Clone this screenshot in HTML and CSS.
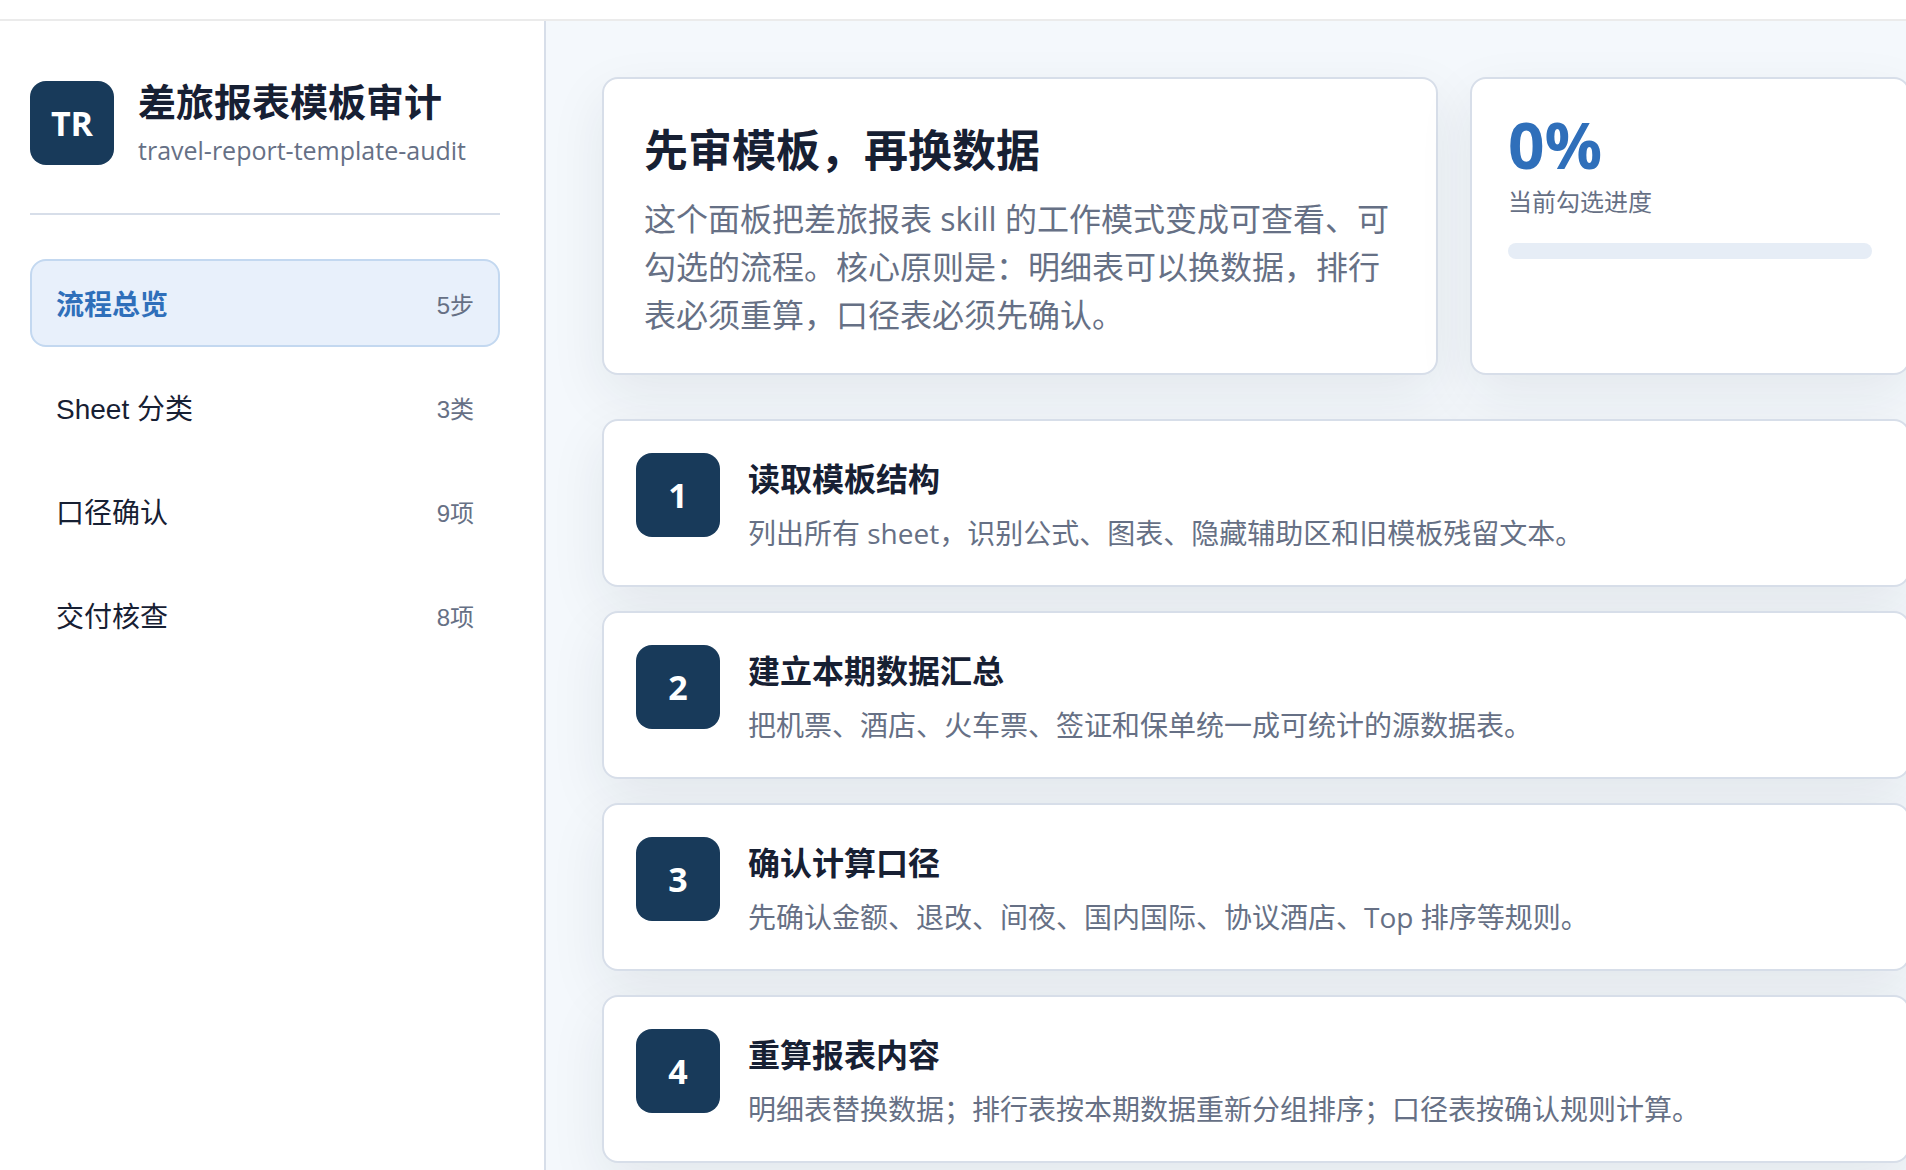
FILE: index.html
```html
<!DOCTYPE html>
<html lang="zh-CN">
<head>
<meta charset="utf-8">
<meta name="viewport" content="width=device-width, initial-scale=1">
<title>差旅报表模板审计</title>
<link rel="stylesheet" href="styles.css">
</head>
<body>
<div class="topbar"></div>
<div class="app">
  <aside class="sidebar">
    <header class="brand">
      <div class="mark">TR</div>
      <div class="brand-text">
        <h1>差旅报表模板审计</h1>
        <p>travel-report-template-audit</p>
      </div>
    </header>
    <nav class="nav">
      <button type="button" class="active" aria-current="page"><span>流程总览</span><small>5步</small></button>
      <button type="button"><span>Sheet 分类</span><small>3类</small></button>
      <button type="button"><span>口径确认</span><small>9项</small></button>
      <button type="button"><span>交付核查</span><small>8项</small></button>
    </nav>
  </aside>
  <main class="main">
    <section class="hero">
      <div class="card intro">
        <h2>先审模板，再换数据</h2>
        <p>这个面板把差旅报表 skill 的工作模式变成可查看、可勾选的流程。核心原则是：明细表可以换数据，排行表必须重算，口径表必须先确认。</p>
      </div>
      <div class="card score">
        <strong>0%</strong>
        <label for="progress">当前勾选进度</label>
        <progress id="progress" value="0" max="100"></progress>
      </div>
    </section>
    <section class="steps">
      <article class="card step">
        <div class="mark">1</div>
        <div>
          <h3>读取模板结构</h3>
          <p>列出所有 sheet，识别公式、图表、隐藏辅助区和旧模板残留文本。</p>
        </div>
      </article>
      <article class="card step">
        <div class="mark">2</div>
        <div>
          <h3>建立本期数据汇总</h3>
          <p>把机票、酒店、火车票、签证和保单统一成可统计的源数据表。</p>
        </div>
      </article>
      <article class="card step">
        <div class="mark">3</div>
        <div>
          <h3>确认计算口径</h3>
          <p>先确认金额、退改、间夜、国内国际、协议酒店、Top 排序等规则。</p>
        </div>
      </article>
      <article class="card step">
        <div class="mark">4</div>
        <div>
          <h3>重算报表内容</h3>
          <p>明细表替换数据；排行表按本期数据重新分组排序；口径表按确认规则计算。</p>
        </div>
      </article>
    </section>
  </main>
</div>
</body>
</html>
```
FILE: styles.css
```css
:root {
  --ink: #172033;
  --muted: #667085;
  --line: #d7dee9;
  --navy: #183a5a;
  --blue: #2f6fba;
}

* {
  box-sizing: border-box;
  margin: 0;
}

body {
  display: flex;
  flex-direction: column;
  height: 100vh;
  overflow: hidden;
  background: #f4f8fc;
  color: var(--ink);
  font-family: "Open Sans", "Noto Sans CJK SC", sans-serif;
}

.topbar {
  flex: none;
  height: 21px;
  background: #fff;
  border-bottom: 2px solid #ebebeb;
}

.app {
  flex: 1;
  min-height: 0;
  display: grid;
  grid-template-columns: 546px minmax(0, 1fr);
}

.sidebar {
  padding: 56px 44px 56px 30px;
  background: #fff;
  border-right: 2px solid var(--line);
}

.brand {
  display: flex;
  align-items: center;
  gap: 24px;
  padding-bottom: 44px;
  border-bottom: 2px solid var(--line);
}

.brand h1 {
  font-size: 38px;
  line-height: 48px;
  white-space: nowrap;
}

.brand p {
  margin-top: 6px;
  color: var(--muted);
  font-size: 25px;
  line-height: 38px;
}

.mark {
  flex: none;
  display: grid;
  place-items: center;
  width: 84px;
  height: 84px;
  border-radius: 16px;
  background: var(--navy);
  color: #fff;
  font-size: 34px;
  font-weight: 700;
}

.nav {
  display: grid;
  gap: 16px;
  margin-top: 44px;
}

.nav button {
  display: flex;
  align-items: center;
  justify-content: space-between;
  height: 88px;
  padding: 0 24px;
  border: 2px solid transparent;
  border-radius: 16px;
  background: none;
  color: var(--ink);
  font-family: "Liberation Sans", "Noto Sans CJK SC", sans-serif;
  font-size: 28px;
}

.nav small {
  color: var(--muted);
  font-size: 24px;
  font-weight: 400;
}

.nav .active {
  border-color: #c3d8f0;
  background: #e8f0fb;
  color: var(--blue);
  font-weight: 700;
}

.main {
  margin-right: -4px;
  padding: 56px 0 56px 56px;
}

.card {
  border: 2px solid var(--line);
  border-radius: 16px;
  background: #fff;
  box-shadow: 0 20px 56px rgba(23, 32, 51, 0.08);
}

.hero {
  display: grid;
  grid-template-columns: minmax(0, 1fr) 440px;
  gap: 32px;
  margin-bottom: 44px;
}

.intro {
  padding: 36px 40px 34px;
}

.intro h2 {
  margin-bottom: 10px;
  font-size: 44px;
  line-height: 70px;
}

.intro p {
  color: var(--muted);
  font-size: 32px;
  line-height: 48px;
}

.score {
  display: flex;
  flex-direction: column;
  padding: 36px;
}

.score strong {
  color: var(--blue);
  font-size: 64px;
  line-height: 60px;
}

.score label {
  margin: 8px 0 22px;
  color: var(--muted);
  font-size: 24px;
  line-height: 38px;
}

.score progress {
  appearance: none;
  width: 100%;
  height: 16px;
  border: 0;
  border-radius: 8px;
  overflow: hidden;
  background: #e6edf6;
}

.score progress::-webkit-progress-bar {
  background: #e6edf6;
}

.score progress::-webkit-progress-value {
  background: var(--blue);
}

.steps {
  display: grid;
  gap: 24px;
}

.step {
  display: flex;
  gap: 28px;
  padding: 32px;
}

.step h3 {
  margin-bottom: 8px;
  font-size: 32px;
  line-height: 52px;
}

.step p {
  color: var(--muted);
  font-size: 28px;
  line-height: 40px;
}
```
